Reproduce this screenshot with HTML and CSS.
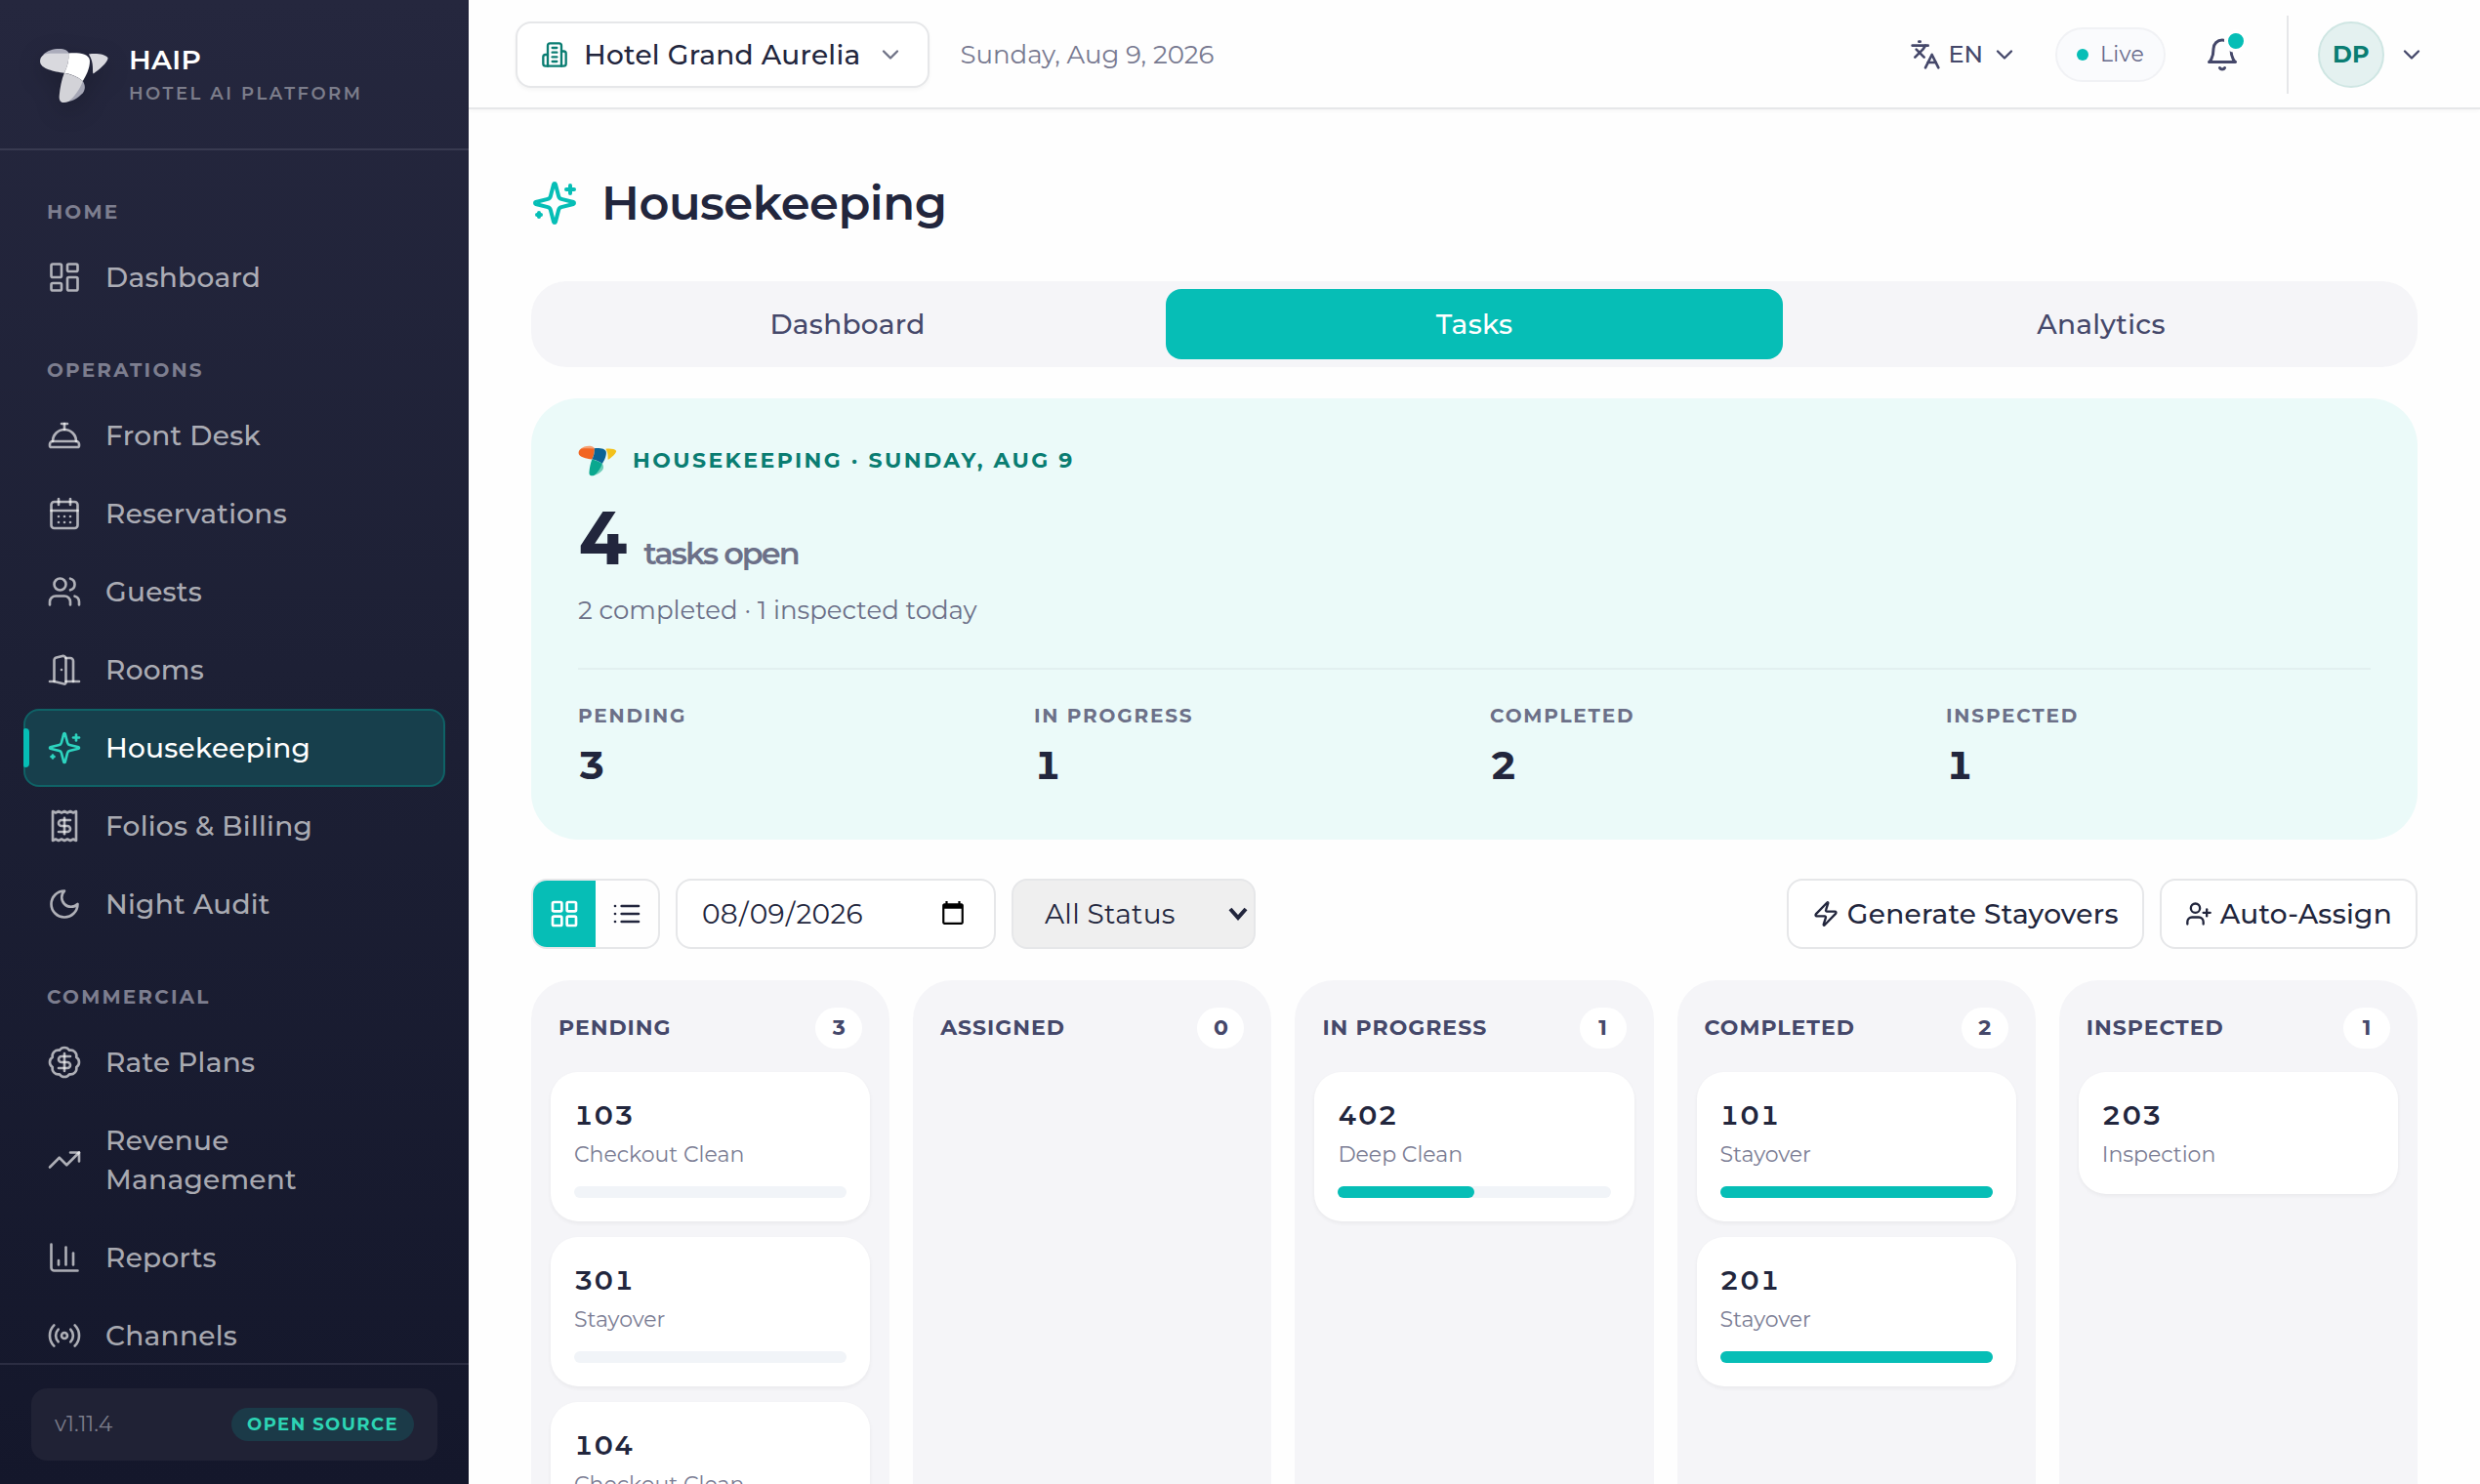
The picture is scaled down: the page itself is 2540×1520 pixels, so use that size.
FILE: index.html
```html
<!DOCTYPE html>
<html lang="en">
<head>
<meta charset="utf-8">
<meta name="viewport" content="width=device-width, initial-scale=1">
<title>Housekeeping - HAIP</title>
<link rel="stylesheet" href="styles.css">
</head>
<body>
<svg class="sprite" aria-hidden="true">
  <symbol id="sparkles" viewBox="0 0 24 24"><path d="M9.937 15.5A2 2 0 0 0 8.5 14.063l-6.135-1.582a.5.5 0 0 1 0-.962L8.5 9.936A2 2 0 0 0 9.937 8.5l1.582-6.135a.5.5 0 0 1 .963 0L14.063 8.5A2 2 0 0 0 15.5 9.937l6.135 1.581a.5.5 0 0 1 0 .964L15.5 14.063a2 2 0 0 0-1.437 1.437l-1.582 6.135a.5.5 0 0 1-.963 0z"/><path d="M20 3v4"/><path d="M22 5h-4"/><path d="M4 17v2"/><path d="M5 18H3"/></symbol>
  <symbol id="chevron" viewBox="0 0 24 24"><path d="m6 9 6 6 6-6"/></symbol>
</svg>
<div class="app">
  <aside class="sidebar">
    <div class="brand">
      <svg class="brand-logo" viewBox="14 24 212 168" aria-hidden="true">
        <path fill="#abacbb" d="M25 46C40 30 60 26 80 27C97 29 103 36 104 42L60 44Z"/>
        <path fill="#d9d9de" d="M17 65C17 50 28 40 50 41L103 41C105 60 100 80 90 100C60 95 18 88 17 65Z"/>
        <path fill="#fff" d="M103 40C130 38 165 40 167 62C168 85 155 110 146 124C128 110 110 103 90 100C100 80 105 60 103 40Z"/>
        <path fill="#a5a6b5" d="M146 124C153 135 155 148 146 160C132 175 115 185 100 186Z"/>
        <path fill="#d3d3d8" d="M90 100C110 103 130 112 146 124C138 148 120 172 103 186C96 189 88 190 82 188C75 185 74 176 75 168C77 145 82 120 90 100Z"/>
        <path fill="#d9d9de" d="M164 43C185 40 215 42 222 55C220 70 195 90 178 102C173 98 182 70 164 43Z"/>
      </svg>
      <div>
        <div class="brand-name">HAIP</div>
        <div class="brand-tag">Hotel AI Platform</div>
      </div>
    </div>
    <nav class="nav" aria-label="Main">
      <h2 class="nav-label">Home</h2>
      <a class="nav-item" href="#"><svg class="icon" viewBox="0 0 24 24"><rect width="7" height="9" x="3" y="3" rx="1"/><rect width="7" height="5" x="14" y="3" rx="1"/><rect width="7" height="9" x="14" y="12" rx="1"/><rect width="7" height="5" x="3" y="16" rx="1"/></svg><span>Dashboard</span></a>
      <h2 class="nav-label">Operations</h2>
      <a class="nav-item" href="#"><svg class="icon" viewBox="0 0 24 24"><path d="M3 20a1 1 0 0 1-1-1v-1a2 2 0 0 1 2-2h16a2 2 0 0 1 2 2v1a1 1 0 0 1-1 1Z"/><path d="M20 16a8 8 0 1 0-16 0"/><path d="M12 4v4"/><path d="M10 4h4"/></svg><span>Front Desk</span></a>
      <a class="nav-item" href="#"><svg class="icon" viewBox="0 0 24 24"><path d="M8 2v4"/><path d="M16 2v4"/><rect width="18" height="18" x="3" y="4" rx="2"/><path d="M3 10h18"/><path d="M8 14h.01"/><path d="M12 14h.01"/><path d="M16 14h.01"/><path d="M8 18h.01"/><path d="M12 18h.01"/><path d="M16 18h.01"/></svg><span>Reservations</span></a>
      <a class="nav-item" href="#"><svg class="icon" viewBox="0 0 24 24"><path d="M16 21v-2a4 4 0 0 0-4-4H6a4 4 0 0 0-4 4v2"/><circle cx="9" cy="7" r="4"/><path d="M22 21v-2a4 4 0 0 0-3-3.87"/><path d="M16 3.13a4 4 0 0 1 0 7.75"/></svg><span>Guests</span></a>
      <a class="nav-item" href="#"><svg class="icon" viewBox="0 0 24 24"><path d="M13 4h3a2 2 0 0 1 2 2v14"/><path d="M2 20h3"/><path d="M13 20h9"/><path d="M10 12v.01"/><path d="M13 4.562v16.157a1 1 0 0 1-1.242.97L5 20V5.562a2 2 0 0 1 1.515-1.94l4-1A2 2 0 0 1 13 4.561Z"/></svg><span>Rooms</span></a>
      <a class="nav-item active" href="#" aria-current="page"><svg class="icon"><use href="#sparkles"/></svg><span>Housekeeping</span></a>
      <a class="nav-item" href="#"><svg class="icon" viewBox="0 0 24 24"><path d="M4 2v20l2-1 2 1 2-1 2 1 2-1 2 1 2-1 2 1V2l-2 1-2-1-2 1-2-1-2 1-2-1-2 1Z"/><path d="M16 8h-6a2 2 0 1 0 0 4h4a2 2 0 1 1 0 4H8"/><path d="M12 17.5v-11"/></svg><span>Folios &amp; Billing</span></a>
      <a class="nav-item" href="#"><svg class="icon" viewBox="0 0 24 24"><path d="M12 3a6 6 0 0 0 9 9 9 9 0 1 1-9-9Z"/></svg><span>Night Audit</span></a>
      <h2 class="nav-label">Commercial</h2>
      <a class="nav-item" href="#"><svg class="icon" viewBox="0 0 24 24"><path d="M3.85 8.62a4 4 0 0 1 4.78-4.77 4 4 0 0 1 6.74 0 4 4 0 0 1 4.78 4.78 4 4 0 0 1 0 6.74 4 4 0 0 1-4.77 4.78 4 4 0 0 1-6.75 0 4 4 0 0 1-4.78-4.77 4 4 0 0 1 0-6.76Z"/><path d="M16 8h-6a2 2 0 1 0 0 4h4a2 2 0 1 1 0 4H8"/><path d="M12 18V6"/></svg><span>Rate Plans</span></a>
      <a class="nav-item" href="#"><svg class="icon" viewBox="0 0 24 24"><path d="M22 7l-8.5 8.5-5-5L2 17"/><path d="M16 7h6v6"/></svg><span>Revenue<br>Management</span></a>
      <a class="nav-item" href="#"><svg class="icon" viewBox="0 0 24 24"><path d="M3 3v16a2 2 0 0 0 2 2h16"/><path d="M18 17V9"/><path d="M13 17V5"/><path d="M8 17v-3"/></svg><span>Reports</span></a>
      <a class="nav-item" href="#"><svg class="icon" viewBox="0 0 24 24"><path d="M4.9 19.1C1 15.2 1 8.8 4.9 4.9"/><path d="M7.8 16.2c-2.3-2.3-2.3-6.1 0-8.5"/><circle cx="12" cy="12" r="2"/><path d="M16.2 7.8c2.3 2.3 2.3 6.1 0 8.5"/><path d="M19.1 4.9C23 8.8 23 15.1 19.1 19"/></svg><span>Channels</span></a>
    </nav>
    <div class="side-foot">
      <div class="version">
        <span>v1.11.4</span>
        <span class="oss">Open Source</span>
      </div>
    </div>
  </aside>

  <div class="page">
    <header class="topbar">
      <button class="property" type="button">
        <svg class="icon" viewBox="0 0 24 24"><path d="M6 22V4a2 2 0 0 1 2-2h8a2 2 0 0 1 2 2v18Z"/><path d="M6 12H4a2 2 0 0 0-2 2v6a2 2 0 0 0 2 2h2"/><path d="M18 9h2a2 2 0 0 1 2 2v9a2 2 0 0 1-2 2h-2"/><path d="M10 6h4"/><path d="M10 10h4"/><path d="M10 14h4"/><path d="M10 18h4"/></svg>
        <span>Hotel Grand Aurelia</span>
        <svg class="icon chev"><use href="#chevron"/></svg>
      </button>
      <span class="today">Sunday, Aug 9, 2026</span>
      <div class="top-right">
        <button class="lang" type="button">
          <svg class="icon" viewBox="0 0 24 24"><path d="m5 8 6 6"/><path d="m4 14 6-6 2-3"/><path d="M2 5h12"/><path d="M7 2h1"/><path d="m22 22-5-10-5 10"/><path d="M14 18h6"/></svg>
          <span>EN</span>
          <svg class="icon chev"><use href="#chevron"/></svg>
        </button>
        <span class="live"><i class="live-dot"></i>Live</span>
        <button class="bell" type="button" aria-label="Notifications">
          <svg class="icon" viewBox="0 0 24 24"><path d="M6 8a6 6 0 0 1 12 0c0 7 3 9 3 9H3s3-2 3-9"/><path d="M10.3 21a1.94 1.94 0 0 0 3.4 0"/></svg>
          <i class="bell-dot"></i>
        </button>
        <button class="account" type="button">
          <span class="avatar">DP</span>
          <svg class="icon chev"><use href="#chevron"/></svg>
        </button>
      </div>
    </header>

    <main class="main">
      <h1 class="title"><svg class="icon"><use href="#sparkles"/></svg>Housekeeping</h1>

      <div class="tabs" role="tablist">
        <button class="tab" type="button" role="tab">Dashboard</button>
        <button class="tab selected" type="button" role="tab" aria-selected="true">Tasks</button>
        <button class="tab" type="button" role="tab">Analytics</button>
      </div>

      <section class="hero">
        <div class="eyebrow">
          <svg class="hero-logo" viewBox="14 24 212 168" aria-hidden="true">
            <path fill="#f7a072" d="M25 46C40 30 60 26 80 27C97 29 103 36 104 42L60 44Z"/>
            <path fill="#f26522" d="M17 65C17 50 28 40 50 41L103 41C105 60 100 80 90 100C60 95 18 88 17 65Z"/>
            <path fill="#0b6395" d="M103 40C130 38 165 40 167 62C168 85 155 110 146 124C128 110 110 103 90 100C100 80 105 60 103 40Z"/>
            <path fill="#6fcdb9" d="M146 124C153 135 155 148 146 160C132 175 115 185 100 186Z"/>
            <path fill="#0aa88f" d="M90 100C110 103 130 112 146 124C138 148 120 172 103 186C96 189 88 190 82 188C75 185 74 176 75 168C77 145 82 120 90 100Z"/>
            <path fill="#f2c11c" d="M164 43C185 40 215 42 222 55C220 70 195 90 178 102C173 98 182 70 164 43Z"/>
          </svg>
          <span>Housekeeping · Sunday, Aug 9</span>
        </div>
        <p class="headline"><strong>4</strong><span>tasks open</span></p>
        <p class="summary">2 completed · 1 inspected today</p>
        <dl class="stats">
          <div><dt>Pending</dt><dd>3</dd></div>
          <div><dt>In Progress</dt><dd>1</dd></div>
          <div><dt>Completed</dt><dd>2</dd></div>
          <div><dt>Inspected</dt><dd>1</dd></div>
        </dl>
      </section>

      <div class="toolbar">
        <div class="view-toggle">
          <button class="on" type="button" aria-label="Board view"><svg class="icon" viewBox="0 0 24 24"><rect width="7" height="7" x="3" y="3" rx="1"/><rect width="7" height="7" x="14" y="3" rx="1"/><rect width="7" height="7" x="14" y="14" rx="1"/><rect width="7" height="7" x="3" y="14" rx="1"/></svg></button>
          <button type="button" aria-label="List view"><svg class="icon" viewBox="0 0 24 24"><path d="M3 12h.01"/><path d="M3 18h.01"/><path d="M3 6h.01"/><path d="M8 12h13"/><path d="M8 18h13"/><path d="M8 6h13"/></svg></button>
        </div>
        <input class="date" type="date" value="2026-08-09" aria-label="Date">
        <select class="status" aria-label="Status"><option>All Status</option></select>
        <div class="actions">
          <button class="action" type="button"><svg class="icon" viewBox="0 0 24 24"><path d="M4 14a1 1 0 0 1-.78-1.63l9.9-10.2a.5.5 0 0 1 .86.46l-1.92 6.02A1 1 0 0 0 13 10h7a1 1 0 0 1 .78 1.63l-9.9 10.2a.5.5 0 0 1-.86-.46l1.92-6.02A1 1 0 0 0 11 14z"/></svg>Generate Stayovers</button>
          <button class="action" type="button"><svg class="icon" viewBox="0 0 24 24"><path d="M16 21v-2a4 4 0 0 0-4-4H6a4 4 0 0 0-4 4v2"/><circle cx="9" cy="7" r="4"/><path d="M19 8v6"/><path d="M22 11h-6"/></svg>Auto-Assign</button>
        </div>
      </div>

      <div class="board">
        <section class="column">
          <h2 class="col-head">Pending <span class="count">3</span></h2>
          <article class="card"><h3>103</h3><p>Checkout Clean</p><div class="bar"></div></article>
          <article class="card"><h3>301</h3><p>Stayover</p><div class="bar"></div></article>
          <article class="card"><h3>104</h3><p>Checkout Clean</p><div class="bar"></div></article>
        </section>
        <section class="column">
          <h2 class="col-head">Assigned <span class="count">0</span></h2>
        </section>
        <section class="column">
          <h2 class="col-head">In Progress <span class="count">1</span></h2>
          <article class="card"><h3>402</h3><p>Deep Clean</p><div class="bar"><div class="fill" style="width:50%"></div></div></article>
        </section>
        <section class="column">
          <h2 class="col-head">Completed <span class="count">2</span></h2>
          <article class="card"><h3>101</h3><p>Stayover</p><div class="bar"><div class="fill" style="width:100%"></div></div></article>
          <article class="card"><h3>201</h3><p>Stayover</p><div class="bar"><div class="fill" style="width:100%"></div></div></article>
        </section>
        <section class="column">
          <h2 class="col-head">Inspected <span class="count">1</span></h2>
          <article class="card"><h3>203</h3><p>Inspection</p></article>
        </section>
      </div>
    </main>
  </div>
</div>
</body>
</html>
```
FILE: styles.css
```css
:root {
  --teal: #06beb6;
  --teal-dark: #0a7d72;
  --ink: #22263d;
  --slate: #45486a;
  --muted: #6c7088;
  --line: #e6e7e9;
  --panel: #f5f5f8;
}

* { box-sizing: border-box; }

html, body { height: 100%; }

body {
  margin: 0;
  overflow: hidden;
  background: #fefefe;
  color: var(--ink);
  font-family: Montserrat, Inter, "Noto Sans", sans-serif;
  font-size: 28px;
  line-height: 40px;
  letter-spacing: .01em;
}

h1, h2, h3, p, dl, dd { margin: 0; }

button, input, select {
  font: inherit;
  color: inherit;
  letter-spacing: inherit;
}

button {
  padding: 0;
  border: 0;
  background: none;
}

.sprite {
  position: absolute;
  width: 0;
  height: 0;
}

.icon {
  flex: none;
  width: 28px;
  height: 28px;
  fill: none;
  stroke: currentColor;
  stroke-width: 2;
  stroke-linecap: round;
  stroke-linejoin: round;
}

.app {
  display: flex;
  height: 100vh;
}

/* Sidebar */

.sidebar {
  flex: none;
  display: flex;
  flex-direction: column;
  width: 480px;
  background: linear-gradient(#25273e, #1d2035 45%, #14172b);
}

.brand {
  flex: none;
  display: flex;
  align-items: center;
  gap: 20px;
  padding: 44px 40px 38px;
  border-bottom: 2px solid #383a50;
}

.brand-logo {
  flex: none;
  width: 72px;
  height: 57px;
  margin-bottom: 4px;
  filter: drop-shadow(0 8px 12px rgba(0, 0, 0, .2));
}

.brand-name {
  color: #fff;
  font-weight: 600;
  line-height: 34px;
}

.brand-tag {
  color: #7c7d8b;
  font-size: 18px;
  font-weight: 600;
  line-height: 36px;
  letter-spacing: .14em;
  text-transform: uppercase;
}

.nav {
  flex: 1;
  min-height: 0;
  overflow: hidden;
  padding: 8px 24px;
}

.nav-label {
  padding: 40px 24px 12px;
  color: #7d7e8f;
  font-size: 20px;
  font-weight: 700;
  line-height: 30px;
  letter-spacing: .11em;
  text-transform: uppercase;
}

.nav-item {
  position: relative;
  display: flex;
  align-items: center;
  gap: 24px;
  padding: 18px 22px;
  border: 2px solid transparent;
  border-radius: 16px;
  color: rgba(255, 255, 255, .65);
  font-weight: 500;
  text-decoration: none;
}

.nav-item .icon {
  width: 36px;
  height: 36px;
  stroke-width: 1.75;
}

.nav-item.active {
  background: #173f4c;
  border-color: #0f6266;
  color: #fff;
}

.nav-item.active .icon { color: #2dd4bf; }

.nav-item.active::before {
  content: "";
  position: absolute;
  left: -2px;
  top: 18px;
  bottom: 18px;
  width: 6px;
  border-radius: 2px 4px 4px 2px;
  background: var(--teal);
}

.side-foot {
  flex: none;
  padding: 24px 32px;
  border-top: 2px solid #2b2d42;
}

.version {
  display: flex;
  align-items: center;
  justify-content: space-between;
  padding: 17px 24px;
  border-radius: 16px;
  background: #202235;
  color: #7c7d8b;
  font-size: 22px;
  letter-spacing: 0;
}

.oss {
  padding: 0 16px;
  border-radius: 17px;
  background: #1b3a48;
  color: #2dd4b4;
  font-size: 18px;
  font-weight: 700;
  line-height: 34px;
  letter-spacing: .08em;
  text-transform: uppercase;
}

/* Top bar */

.page {
  flex: 1;
  min-width: 0;
  display: flex;
  flex-direction: column;
}

.topbar {
  flex: none;
  display: flex;
  align-items: center;
  gap: 32px;
  height: 112px;
  padding: 2px 56px 0 48px;
  border-bottom: 2px solid var(--line);
  box-shadow: 0 2px 4px rgba(0, 0, 0, .03);
}

.property {
  display: flex;
  align-items: center;
  gap: 16px;
  padding: 12px 24px;
  border: 2px solid var(--line);
  border-radius: 16px;
  background: #fff;
  font-weight: 500;
  box-shadow: 0 2px 4px rgba(0, 0, 0, .04);
}

.property .icon { color: var(--teal-dark); }
.property .chev { color: #6f7286; }

.today {
  color: #777990;
  font-size: 26px;
  letter-spacing: 0;
}

.top-right {
  display: flex;
  align-items: center;
  margin-left: auto;
  color: var(--slate);
}

.lang {
  display: flex;
  align-items: center;
  gap: 8px;
  margin-right: 38px;
  font-size: 24px;
  font-weight: 500;
  letter-spacing: 0;
}

.lang .icon {
  width: 32px;
  height: 32px;
}

.lang .chev {
  width: 28px;
  height: 28px;
}

.live {
  display: flex;
  align-items: center;
  gap: 12px;
  margin-right: 40px;
  padding: 6px 20px;
  border: 2px solid #f1f2f5;
  border-radius: 28px;
  background: #fafbfd;
  color: #66698a;
  font-size: 22px;
}

.live-dot {
  width: 12px;
  height: 12px;
  border-radius: 50%;
  background: var(--teal);
}

.bell {
  position: relative;
  display: flex;
  margin-right: 48px;
}

.bell .icon {
  width: 36px;
  height: 36px;
}

.bell-dot {
  position: absolute;
  top: -8px;
  right: -8px;
  width: 24px;
  height: 24px;
  border: 4px solid #fff;
  border-radius: 50%;
  background: var(--teal);
}

.account {
  display: flex;
  align-items: center;
  gap: 14px;
  padding: 6px 0 6px 30px;
  border-left: 2px solid var(--line);
}

.avatar {
  width: 68px;
  border: 2px solid #cfe6e3;
  border-radius: 50%;
  background: #e4f1f0;
  color: var(--teal-dark);
  font-size: 24px;
  font-weight: 700;
  line-height: 64px;
}

/* Page content */

.main {
  flex: 1;
  min-height: 0;
  display: flex;
  flex-direction: column;
  padding: 64px 64px 0;
}

.title {
  display: flex;
  align-items: center;
  gap: 24px;
  margin-bottom: 48px;
  font-size: 48px;
  font-weight: 600;
  line-height: 64px;
  letter-spacing: -.01em;
}

.title .icon {
  width: 48px;
  height: 48px;
  color: var(--teal);
}

.tabs {
  flex: none;
  display: grid;
  grid-template-columns: repeat(3, 1fr);
  gap: 10px;
  padding: 8px;
  border-radius: 36px;
  background: var(--panel);
}

.tab {
  height: 72px;
  border-radius: 16px;
  color: var(--slate);
  font-weight: 500;
}

.tab.selected {
  background: var(--teal);
  color: #fff;
}

.hero {
  flex: none;
  margin-top: 32px;
  padding: 48px;
  border-radius: 48px;
  background: #ebfaf9;
}

.eyebrow {
  display: flex;
  align-items: center;
  gap: 16px;
  height: 32px;
  color: var(--teal-dark);
  font-size: 22px;
  font-weight: 700;
  letter-spacing: .11em;
  text-transform: uppercase;
}

.hero-logo {
  width: 40px;
  height: 32px;
}

.headline {
  display: flex;
  align-items: baseline;
  gap: 16px;
  margin-top: 27px;
  line-height: 72px;
}

.headline strong {
  font-size: 76px;
  font-weight: 700;
  font-variant-numeric: tabular-nums;
  letter-spacing: -2px;
}

.headline span {
  color: var(--muted);
  font-size: 32px;
  font-weight: 600;
  letter-spacing: -2px;
}

.summary {
  margin-top: 2px;
  color: var(--muted);
  font-size: 26px;
  letter-spacing: 0;
}

.stats {
  display: grid;
  grid-template-columns: repeat(4, 1fr);
  gap: 32px;
  margin-top: 39px;
  padding-top: 32px;
  border-top: 2px solid #e2f0f0;
}

.stats dt {
  color: var(--muted);
  font-size: 20px;
  font-weight: 700;
  line-height: 30px;
  letter-spacing: .09em;
  text-transform: uppercase;
}

.stats dd {
  margin-top: 8px;
  font-size: 40px;
  font-weight: 700;
  line-height: 56px;
  font-variant-numeric: tabular-nums;
}

.toolbar {
  flex: none;
  display: flex;
  gap: 16px;
  height: 72px;
  margin: 40px 0 32px;
}

.view-toggle {
  display: flex;
  overflow: hidden;
  border: 2px solid var(--line);
  border-radius: 16px;
}

.view-toggle button {
  display: flex;
  align-items: center;
  justify-content: center;
  width: 64px;
}

.view-toggle .icon {
  width: 32px;
  height: 32px;
}

.view-toggle .on {
  background: var(--teal);
  color: #fff;
}

.date {
  width: 328px;
  padding: 0 28px 0 24px;
  border: 2px solid var(--line);
  border-radius: 16px;
  background: #fff;
}

.date::-webkit-calendar-picker-indicator {
  width: 28px;
  height: 28px;
  padding: 0;
  background-size: contain;
}

.status {
  width: 250px;
  padding: 0 32px;
  border: 2px solid var(--line);
  border-radius: 16px;
  appearance: none;
  background: #efefef url("data:image/svg+xml,%3Csvg xmlns='http://www.w3.org/2000/svg' viewBox='0 0 20 14'%3E%3Cpath d='M2 2l8 9 8-9' fill='none' stroke='%2322263d' stroke-width='4'/%3E%3C/svg%3E") right 6px center / 20px 14px no-repeat;
}

.actions {
  display: flex;
  gap: 16px;
  margin-left: auto;
}

.action {
  display: flex;
  align-items: center;
  gap: 8px;
  padding: 0 24px;
  border: 2px solid var(--line);
  border-radius: 16px;
  background: #fff;
  font-weight: 500;
}

.board {
  flex: 1;
  min-height: 0;
  display: grid;
  grid-template-columns: repeat(5, 1fr);
  gap: 24px;
}

.column {
  display: flex;
  flex-direction: column;
  gap: 16px;
  min-width: 0;
  padding: 28px 20px 0;
  border-radius: 40px 40px 0 0;
  background: var(--panel);
}

.col-head {
  display: flex;
  align-items: center;
  justify-content: space-between;
  margin-bottom: 8px;
  padding: 0 8px;
  color: var(--slate);
  font-size: 22px;
  font-weight: 700;
  line-height: 42px;
  letter-spacing: 1px;
  text-transform: uppercase;
}

.count {
  min-width: 48px;
  border-radius: 21px;
  background: #fff;
  letter-spacing: 0;
  text-align: center;
}

.card {
  flex: none;
  padding: 24px;
  border-radius: 28px;
  background: #fff;
  box-shadow: 0 2px 4px rgba(0, 0, 0, .05);
}

.card h3 {
  font-size: 28px;
  font-weight: 600;
  line-height: 40px;
  letter-spacing: 1px;
  font-variant-numeric: tabular-nums;
}

.card p {
  margin-top: 4px;
  color: #7b7d94;
  font-size: 22px;
  line-height: 33px;
  letter-spacing: 0;
}

.bar {
  height: 12px;
  margin-top: 16px;
  border-radius: 6px;
  background: #f1f4f8;
}

.fill {
  height: 100%;
  border-radius: 6px;
  background: var(--teal);
}
```
